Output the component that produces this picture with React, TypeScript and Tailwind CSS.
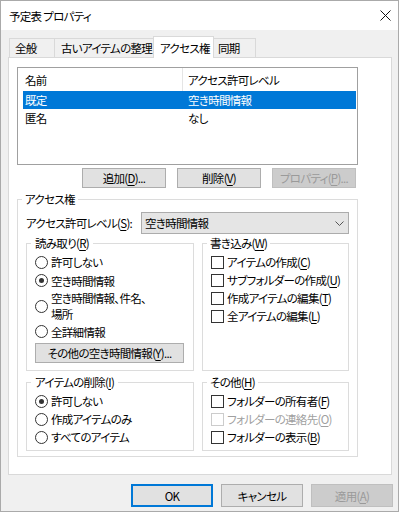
import type { ReactNode } from "react";

// access-key letter, underlined like a Win32 mnemonic
function Key({ k }: { k: string }) {
  return <span className="underline underline-offset-[2px]">{k}</span>;
}

function PushButton({
  children,
  className = "",
  disabled = false,
  primary = false,
}: {
  children: ReactNode;
  className?: string;
  disabled?: boolean;
  primary?: boolean;
}) {
  let look = "border-[#adadad] bg-[#e1e1e1]";
  if (disabled) look = "border-[#bfbfbf] bg-[#cccccc] text-[#9a9a9a]";
  if (primary) look = "border-[#0078d7] bg-[#e1e1e1] shadow-[inset_0_0_0_1px_#0078d7]";
  return (
    <div className={`flex shrink-0 items-center justify-center border ${look} ${className}`}>
      {children}
    </div>
  );
}

function Radio({ checked = false, children, className = "h-[18px]" }: { checked?: boolean; children: ReactNode; className?: string }) {
  return (
    <div className={`flex items-center gap-[3px] ${className}`}>
      <span className="flex h-[13px] w-[13px] shrink-0 items-center justify-center rounded-full border border-[#333333] bg-white">
        {checked && <span className="h-[5px] w-[5px] rounded-full bg-[#333333]" />}
      </span>
      <span>{children}</span>
    </div>
  );
}

function Check({ children, disabled = false }: { children: ReactNode; disabled?: boolean }) {
  return (
    <div className={`flex h-[18px] items-center gap-[3px] ${disabled ? "text-[#a0a0a0]" : ""}`}>
      <span className={`h-[13px] w-[13px] shrink-0 border bg-white ${disabled ? "border-[#cccccc]" : "border-[#333333]"}`} />
      <span>{children}</span>
    </div>
  );
}

function Tab({ children, className }: { children: ReactNode; className: string }) {
  return <div className={`flex items-center border-x border-t border-[#d9d9d9] ${className}`}>{children}</div>;
}

export default function App() {
  return (
    <div className="h-[516px] w-[400px] whitespace-nowrap bg-white font-['Noto_Sans_CJK_JP',sans-serif] text-[11.5px] leading-[16px] tracking-[-0.7px] text-black [font-feature-settings:'palt']">
      <div className="flex h-[512px] w-[399px] flex-col border border-[#aaaaaa] bg-[#f0f0f0]">
        {/* title bar */}
        <div className="flex h-[29px] shrink-0 items-center justify-between bg-white pl-[8px] pr-[7px]">
          <span>予定表 プロパティ</span>
          <svg width="11" height="11" viewBox="0 0 11 11">
            <path d="M0.5 0.5L10.5 10.5M10.5 0.5L0.5 10.5" stroke="#111" strokeWidth="1" />
          </svg>
        </div>

        <div className="pt-[6px]">
          {/* tabs */}
          <div className="flex h-[21px] items-end pl-[8px]">
            <Tab className="h-[19px] w-[46px] pl-[5px]">全般</Tab>
            <Tab className="-ml-px h-[19px] w-[100px] pl-[6px]">古いアイテムの整理</Tab>
            <Tab className="relative z-10 -mb-px -ml-px h-[22px] w-[61px] bg-white pl-[6px]">アクセス権</Tab>
            <Tab className="-ml-px h-[19px] w-[43px] pl-[4px]">同期</Tab>
          </div>

          {/* tab page */}
          <div className="ml-[7px] h-[418px] w-[384px] border border-[#d9d9d9] bg-white">
            {/* permission list */}
            <div className="ml-[8px] mt-[9px] h-[98px] w-[341px] border border-[#a0a0a0] bg-white">
              <div className="flex h-[23px] items-center">
                <div className="flex h-full w-[164px] items-center pl-[7px]">名前</div>
                <div className="flex h-full items-center border-l border-[#e5e5e5] pl-[5px]">アクセス許可レベル</div>
              </div>
              <div className="ml-[5px] mr-[1px] flex h-[18px] items-center bg-[#0078d7] pl-[2px] text-white">
                <div className="w-[163px]">既定</div>
                <div>空き時間情報</div>
              </div>
              <div className="ml-[5px] mr-[1px] flex h-[18px] items-center pl-[2px]">
                <div className="w-[163px]">匿名</div>
                <div>なし</div>
              </div>
            </div>

            <div className="mt-[3px] flex gap-[11px] pl-[73px]">
              <PushButton className="h-[20px] w-[84px]">
                追加(<Key k="D" />)...
              </PushButton>
              <PushButton className="h-[20px] w-[84px]">
                削除(<Key k="V" />)
              </PushButton>
              <PushButton className="h-[20px] w-[84px]" disabled>
                プロパティ(<Key k="P" />)...
              </PushButton>
            </div>

            {/* permissions group */}
            <fieldset className="ml-[8px] mt-[3px] w-[341px] border border-[#dcdcdc] pb-[5px]">
              <legend className="ml-[4px] px-[3px] leading-[16px]">アクセス権</legend>

              <div className="mt-[5px] flex items-center pl-[8px]">
                <div className="w-[115px]">
                  アクセス許可レベル(<Key k="S" />):
                </div>
                <div className="flex h-[22px] w-[208px] items-center justify-between border border-[#acacac] bg-[#e5e5e5] pl-[3px] pr-[4px]">
                  <span>空き時間情報</span>
                  <svg width="9" height="5" viewBox="0 0 9 5">
                    <path d="M0.5 0.5L4.5 4.5L8.5 0.5" fill="none" stroke="#555" strokeWidth="1" />
                  </svg>
                </div>
              </div>

              <div className="mt-[1px] flex gap-[8px] pl-[8px]">
                <fieldset className="h-[136px] w-[168px] border border-[#dcdcdc] pl-[8px] pt-[2px]">
                  <legend className="ml-[-4px] px-[4px] leading-[16px]">
                    読み取り(<Key k="R" />)
                  </legend>
                  <Radio>許可しない</Radio>
                  <Radio checked className="h-[19px]">
                    空き時間情報
                  </Radio>
                  <Radio className="h-[32px]">
                    空き時間情報、件名、
                    <br />
                    場所
                  </Radio>
                  <Radio className="h-[19px]">全詳細情報</Radio>
                  <PushButton className="mt-[2px] h-[20px] w-[149px]">
                    その他の空き時間情報(<Key k="Y" />)...
                  </PushButton>
                </fieldset>

                <fieldset className="h-[136px] w-[147px] border border-[#dcdcdc] pl-[8px] pt-[2px]">
                  <legend className="ml-[-4px] px-[3px] leading-[16px]">
                    書き込み(<Key k="W" />)
                  </legend>
                  <Check>
                    アイテムの作成(<Key k="C" />)
                  </Check>
                  <Check>
                    サブフォルダーの作成(<Key k="U" />)
                  </Check>
                  <Check>
                    作成アイテムの編集(<Key k="T" />)
                  </Check>
                  <Check>
                    全アイテムの編集(<Key k="L" />)
                  </Check>
                </fieldset>
              </div>

              <div className="mt-[3px] flex gap-[8px] pl-[8px]">
                <fieldset className="h-[77px] w-[168px] border border-[#dcdcdc] pl-[8px] pt-[2px]">
                  <legend className="ml-[-4px] px-[4px] leading-[16px]">
                    アイテムの削除(<Key k="I" />)
                  </legend>
                  <Radio checked>許可しない</Radio>
                  <Radio>作成アイテムのみ</Radio>
                  <Radio>すべてのアイテム</Radio>
                </fieldset>

                <fieldset className="h-[77px] w-[147px] border border-[#dcdcdc] pl-[8px] pt-[2px]">
                  <legend className="ml-[-4px] px-[3px] leading-[16px]">
                    その他(<Key k="H" />)
                  </legend>
                  <Check>
                    フォルダーの所有者(<Key k="F" />)
                  </Check>
                  <Check disabled>
                    フォルダーの連絡先(<Key k="O" />)
                  </Check>
                  <Check>
                    フォルダーの表示(<Key k="B" />)
                  </Check>
                </fieldset>
              </div>
            </fieldset>
          </div>

          {/* dialog buttons */}
          <div className="mt-[9px] flex justify-end gap-[8px] pr-[5px]">
            <PushButton className="h-[23px] w-[82px]" primary>
              OK
            </PushButton>
            <PushButton className="h-[23px] w-[82px]">キャンセル</PushButton>
            <PushButton className="h-[23px] w-[82px]" disabled>
              適用(<Key k="A" />)
            </PushButton>
          </div>
        </div>
      </div>
    </div>
  );
}
